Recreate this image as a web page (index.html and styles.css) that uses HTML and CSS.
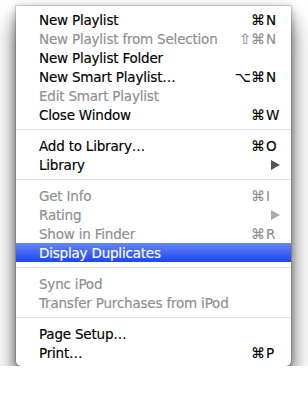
FILE: index.html
```html
<!DOCTYPE html>
<html>
<head>
<meta charset="utf-8">
<link rel="stylesheet" href="styles.css">
</head>
<body>
<div class="menu">
  <div class="item"><span class="label">New Playlist</span><span class="sc"><span class="mods">⌘</span><span class="key">N</span></span></div>
  <div class="item off"><span class="label">New Playlist from Selection</span><span class="sc"><span class="mods">⇧⌘</span><span class="key">N</span></span></div>
  <div class="item"><span class="label">New Playlist Folder</span></div>
  <div class="item"><span class="label">New Smart Playlist…</span><span class="sc"><span class="mods">⌥⌘</span><span class="key">N</span></span></div>
  <div class="item off"><span class="label">Edit Smart Playlist</span></div>
  <div class="item"><span class="label">Close Window</span><span class="sc"><span class="mods">⌘</span><span class="key">W</span></span></div>
  <div class="sep"></div>
  <div class="item"><span class="label">Add to Library…</span><span class="sc"><span class="mods">⌘</span><span class="key">O</span></span></div>
  <div class="item"><span class="label">Library</span><span class="arrow"></span></div>
  <div class="sep"></div>
  <div class="item off"><span class="label">Get Info</span><span class="sc"><span class="mods">⌘</span><span class="key">I</span></span></div>
  <div class="item off"><span class="label">Rating</span><span class="arrow"></span></div>
  <div class="item off"><span class="label">Show in Finder</span><span class="sc"><span class="mods">⌘</span><span class="key">R</span></span></div>
  <div class="item hl"><span class="label">Display Duplicates</span></div>
  <div class="sep"></div>
  <div class="item off"><span class="label">Sync iPod</span></div>
  <div class="item off"><span class="label">Transfer Purchases from iPod</span></div>
  <div class="sep"></div>
  <div class="item"><span class="label">Page Setup…</span></div>
  <div class="item"><span class="label">Print…</span><span class="sc"><span class="mods">⌘</span><span class="key">P</span></span></div>
</div>
</body>
</html>
```

FILE: styles.css
```css
html, body {
  margin: 0;
  padding: 0;
  background: #ffffff;
}
body {
  font-family: "DejaVu Sans", "Liberation Sans", sans-serif;
  font-size: 13.5px;
  letter-spacing: -0.2px;
  color: #000;
}
.menu {
  margin: 6px 0 0 16px;
  width: 275px;
  padding: 4px 0;
  background: #ffffff;
  border-radius: 0 0 5px 5px;
  box-shadow: 0 0 0 1px rgba(0, 0, 0, 0.12), 0 0 6px rgba(0, 0, 0, 0.15), 0 6px 12px rgba(0, 0, 0, 0.3), 0 16px 24px rgba(0, 0, 0, 0.55);
}
.item {
  display: flex;
  align-items: center;
  height: 19px;
  padding: 0 14px 0 23px;
  white-space: nowrap;
  -webkit-text-stroke: 0.15px currentColor;
}
.label {
  flex: 1;
}
.off {
  color: #8e8e8e;
}
.hl {
  color: #ffffff;
  background: linear-gradient(#6486f8, #1c47ef);
}
.sc {
  display: flex;
  align-items: baseline;
}
.mods {
  text-align: right;
  font-size: 14px;
  letter-spacing: 0;
}
.key {
  width: 11px;
  text-align: left;
  padding-left: 1px;
}
.arrow {
  width: 0;
  height: 0;
  border-top: 5px solid transparent;
  border-bottom: 5px solid transparent;
  border-left: 9px solid #555555;
  margin-right: -3px;
}
.off .arrow {
  border-left-color: #aaaaaa;
}
.sep {
  height: 1px;
  margin: 5px 0 6px;
  background: #e2e2e2;
}
```
